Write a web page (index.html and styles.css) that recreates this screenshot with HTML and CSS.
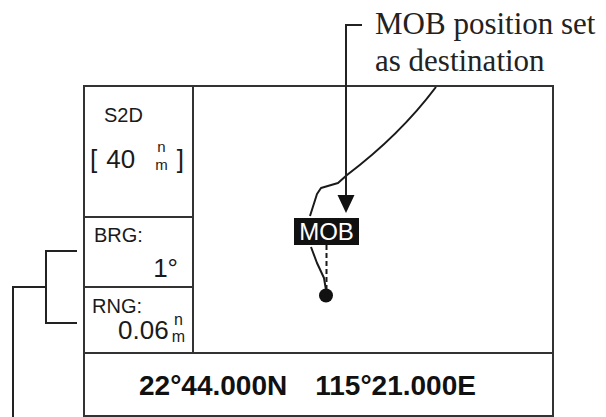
FILE: index.html
```html
<!DOCTYPE html>
<html lang="en">
<head>
  <meta charset="UTF-8" />
  <title>MOB destination</title>
  <link rel="stylesheet" href="styles.css">
</head>
<body>
  <div class="page">
    <div class="note">MOB position set<br>as destination</div>

    <div class="screen">
      <div class="side">
        <div class="cell s2d">
          <div class="label">S2D</div>
          <div class="scale">
            <span>[</span>
            <span class="num">40</span>
            <span class="unit"><span>n</span><span>m</span></span>
            <span class="close">]</span>
          </div>
        </div>
        <div class="cell brg">
          <div class="label">BRG:</div>
          <div class="value">1°</div>
        </div>
        <div class="cell rng">
          <div class="label">RNG:</div>
          <div class="value">
            <span>0.06</span>
            <span class="unit"><span>n</span><span>m</span></span>
          </div>
        </div>
      </div>

      <div class="chart">
        <svg viewBox="194 87 358 265" width="358" height="265">
          <path class="track" d="M436,87 Q400,135 347,175 L338,183 L321,188 L317,194 L310,216" />
          <path class="track" d="M311,247 L317,263 L324,278 L326,290" />
          <line class="dash" x1="326.5" y1="245" x2="326.5" y2="290" />
          <circle cx="326" cy="295.5" r="7" fill="#111" />
          <rect x="294" y="218" width="65" height="27" fill="#111" />
          <text x="326.5" y="240" class="mob">MOB</text>
        </svg>
      </div>

      <div class="pos">
        <span>22°44.000N</span>
        <span>115°21.000E</span>
      </div>
    </div>

    <svg class="leaders" viewBox="0 0 606 417" width="606" height="417">
      <polyline points="362,25 346,25 346,197" />
      <polygon points="337.5,195 354.5,195 346,213" />
      <polyline points="77,251 46,251 46,323 77,323" />
      <polyline points="46,287 13,287 13,417" />
    </svg>
  </div>
</body>
</html>
```

FILE: styles.css
```css
body { margin: 0; background: #fff; }
.page {
  position: relative;
  width: 606px;
  height: 417px;
  overflow: hidden;
  font-family: "Liberation Sans", Arial, sans-serif;
  color: #1a1a1a;
}

.note {
  height: 80px;
  padding-top: 5px;
  margin-left: 375px;
  font-family: "Liberation Serif", "Times New Roman", serif;
  font-size: 31px;
  line-height: 37px;
  white-space: nowrap;
  color: #222;
}

.screen {
  margin-left: 83px;
  width: 471px;
  height: 332px;
  box-sizing: border-box;
  border: 2px solid #333;
  display: grid;
  grid-template-columns: 109px 1fr;
  grid-template-rows: 265px 63px;
}

.side { display: flex; flex-direction: column; border-right: 2px solid #333; }
.cell { box-sizing: border-box; }
.s2d { height: 131px; border-bottom: 2px solid #333; padding: 16px 0 0 19px; }
.brg { height: 70px; border-bottom: 2px solid #333; padding: 5px 14px 0 9px; }
.rng { flex: 1; padding: 6px 7px 0 7px; }

.label { font-size: 20px; line-height: 24px; }

.scale {
  display: flex;
  align-items: flex-end;
  margin: 11px 0 0 -14px;
  font-size: 26px;
  line-height: 30px;
}
.scale .num { margin-left: 9px; }
.scale .unit { margin-left: 20px; }
.scale .close { margin-left: 9px; }

.unit {
  display: inline-flex;
  flex-direction: column;
  align-items: center;
  font-size: 15px;
  line-height: 18px;
}

.value {
  display: flex;
  justify-content: flex-end;
  align-items: flex-end;
  font-size: 26px;
  line-height: 30px;
}
.brg .value { margin-top: 6px; }
.rng .value { margin-top: -7px; }
.rng .unit { margin-left: 3px; font-size: 16px; line-height: 17px; }

.chart svg { display: block; }
.track { fill: none; stroke: #1a1a1a; stroke-width: 2; stroke-linejoin: round; }
.dash { stroke: #1a1a1a; stroke-width: 2; stroke-dasharray: 5 3; }
.mob {
  fill: #fff;
  font-family: "Liberation Sans", Arial, sans-serif;
  font-size: 24px;
  text-anchor: middle;
}

.pos {
  grid-column: 1 / -1;
  border-top: 2px solid #333;
  display: flex;
  gap: 28px;
  padding: 16px 0 0 54px;
  font-size: 28px;
  line-height: 32px;
  font-weight: bold;
  color: #111;
}

.leaders {
  position: absolute;
  top: 0;
  left: 0;
  pointer-events: none;
}
.leaders polyline { fill: none; stroke: #222; stroke-width: 2; }
.leaders polygon { fill: #111; }
```
